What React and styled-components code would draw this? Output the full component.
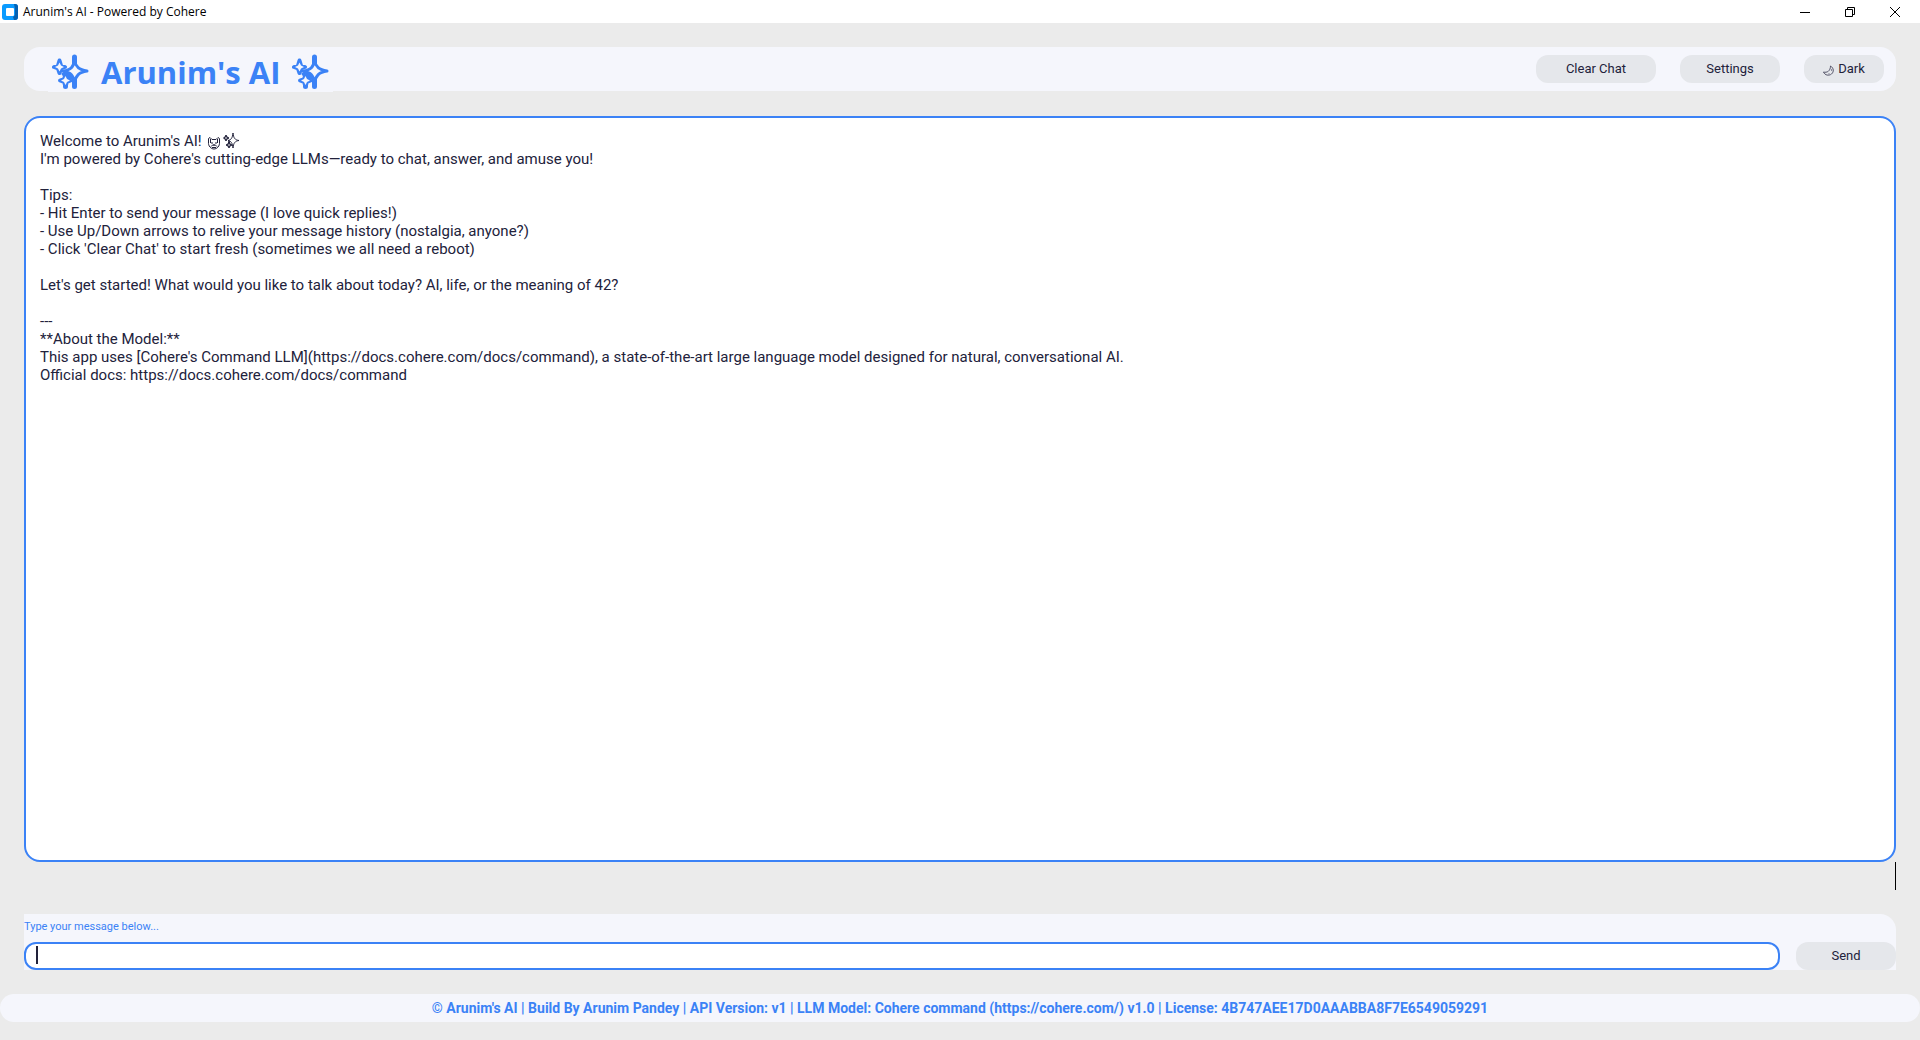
import styled, { createGlobalStyle } from "styled-components";
import { useState } from "react";

const color = {
  bg: "#ebebeb",
  panel: "#f5f6fc",
  main: "#3b82f6",
  text: "#22223b",
  button: "#e5e7eb",
};

const GlobalStyle = createGlobalStyle`
  * {
    box-sizing: border-box;
  }
  body {
    margin: 0;
    background-color: ${color.bg};
    color: ${color.text};
    font-family: Roboto, "Liberation Sans", sans-serif;
  }
`;

const Window = styled.div`
  display: flex;
  flex-direction: column;
  min-height: 100vh;
  padding-bottom: 18px;
`;

const TitleBar = styled.div`
  display: flex;
  align-items: center;
  justify-content: space-between;
  height: 23px;
  padding: 0 3px 0 2px;
  background-color: #fff;
  color: #000;
`;
const AppName = styled.div`
  display: flex;
  align-items: center;
  gap: 5px;
  font-family: "Open Sans", "Noto Sans", sans-serif;
  font-size: 12px;
  line-height: 16px;
`;
const WindowButtons = styled.div`
  display: flex;
`;
const WindowButton = styled.button`
  display: flex;
  align-items: center;
  justify-content: center;
  width: 45px;
  height: 20px;
  padding: 0;
  border: none;
  background: none;
  color: #000;
`;

const Main = styled.main`
  display: flex;
  flex: 1;
  flex-direction: column;
  padding: 24px;
`;
const Header = styled.header`
  display: flex;
  align-items: center;
  justify-content: space-between;
  height: 44px;
  padding: 0 12px 0 24px;
  border-radius: 16px;
  background-color: ${color.panel};
`;
const Logo = styled.h1`
  display: flex;
  align-items: center;
  align-self: flex-start;
  gap: 12px;
  margin: 0;
  padding: 5px 4px 0;
  background-color: ${color.panel};
  font-family: "Open Sans", "Noto Sans", sans-serif;
  font-size: 31px;
  line-height: 40px;
  font-weight: 700;
  color: ${color.main};
`;
const Menu = styled.nav`
  display: flex;
  align-items: center;
  gap: 24px;
`;
const Button = styled.button`
  display: flex;
  align-items: center;
  justify-content: center;
  gap: 4px;
  flex-shrink: 0;
  width: ${({ $width }) => $width};
  height: 28px;
  padding: 0 0 2px;
  border: none;
  border-radius: 12px;
  background-color: ${color.button};
  color: ${color.text};
  font-family: inherit;
  font-size: 13px;
  cursor: pointer;
  svg {
    margin-top: 4px;
  }
`;

const Chat = styled.section`
  flex: 1;
  margin-top: 25px;
  padding: 14px;
  border: 2px solid ${color.main};
  border-radius: 16px;
  background-color: #fff;
`;
const Line = styled.p`
  min-height: 18px;
  margin: 0;
  font-size: 15px;
  line-height: 18px;
  svg {
    margin-left: 2px;
    vertical-align: -4px;
  }
`;
const Status = styled.div`
  align-self: flex-end;
  width: 1px;
  height: 28px;
  margin-bottom: 24px;
  background-color: #000;
`;

const Form = styled.form`
  padding-top: 4px;
  border-top-right-radius: 16px;
  background-color: ${color.panel};
`;
const Label = styled.label`
  display: block;
  font-size: 11px;
  line-height: 18px;
  padding-bottom: 6px;
  color: ${color.main};
`;
const InputRow = styled.div`
  display: flex;
  gap: 16px;
`;
const InputBox = styled.div`
  position: relative;
  flex: 1;
`;
const Input = styled.input`
  display: block;
  width: 100%;
  height: 28px;
  padding: 0 10px;
  border: 2px solid ${color.main};
  border-radius: 12px;
  outline: none;
  background-color: #fff;
  color: ${color.text};
  font-family: inherit;
  font-size: 15px;
  caret-color: transparent;
`;
const Caret = styled.span`
  position: absolute;
  top: 4px;
  left: 12px;
  width: 2px;
  height: 18px;
  background-color: ${color.text};
`;

const Footer = styled.footer`
  border-radius: 14px;
  background-color: ${color.panel};
  font-size: 14px;
  line-height: 28px;
  font-weight: 700;
  text-align: center;
  color: ${color.main};
`;

const AppIcon = () => (
  <svg width="16" height="16" viewBox="0 0 16 16">
    <rect width="16" height="16" rx="3" fill="#0a9bff" />
    <path d="M12 0h1a3 3 0 0 1 3 3v10a3 3 0 0 1-3 3h-1l-1-3 2-2V5z" fill="#0560b0" />
    <rect x="4" y="4" width="8" height="8" rx="1" fill="#fff" />
  </svg>
);

const Sparkles = () => (
  <svg width="37" height="36" viewBox="0 0 37 36" fill="none" strokeLinejoin="round" strokeLinecap="round">
    <g stroke={color.main}>
      <path d="M22.500 3V32.500M13.500 28V32.500" strokeWidth="5" />
      <path d="M11 20l5-3 5 5-4 4z" strokeWidth="3" fill={color.main} />
      <path
        d="M22.500 6C23.500 13 27 16 35 17C27 18 23.500 21.500 22.500 29C21.500 21.500 19 18.500 11 17C19 16 21.500 13 22.500 6Z"
        strokeWidth="3"
        fill={color.panel}
      />
      <path d="M7.500 6.500L9 11.500L13 13L9 14.500L7.500 19L6 14.500L2 13L6 11.500Z" strokeWidth="4" />
      <path d="M13.500 21L15 25L18.500 26.500L15 28L13.500 32L12 28L8 26.500L12 25Z" strokeWidth="4" />
    </g>
    <g fill={color.panel}>
      <path d="M7.500 8.500L9 11.500L12 13L9 14.500L7.500 17.500L6 14.500L3 13L6 11.500Z" />
      <path d="M13.500 22L15 25L18 26.500L15 28L13.500 31L12 28L9 26.500L12 25Z" />
    </g>
  </svg>
);

const Bear = () => (
  <svg width="14" height="16" viewBox="0 0 14 16" fill="none" stroke={color.text}>
    <path d="M1.500 9V4.500L3 3.500L5 5.500H9L11 3.500L12.500 4.500V9" />
    <path d="M1.500 8C1 12 4 15 7 15S13 12 12.500 8" />
    <path d="M3.500 5V9M10.500 5V9M4 9h2M8 9h2M4 12.500C5 10.500 9 10.500 10 12.500M5 13.500h4M6 11h2" />
  </svg>
);

const SmallSparkles = () => (
  <svg width="17" height="18" viewBox="0 0 17 18" fill="#fff" stroke={color.text} strokeLinejoin="round">
    <path d="M10 1C10.500 6 12 8 16 8.500C12 9 10.500 11 10 16C9.500 11 8 9 5 8.500C8 8 9.500 6 10 1Z" />
    <path d="M3 3L4 5L6 6L4 7L3 9L2 7L0.500 6L2 5Z" fill={color.text} />
    <path d="M6 9L7 12L9 13L7 14L6 16L5 14L3 13L5 12Z" fill={color.text} />
    <path d="M2 6h2M5 13h2" stroke="#fff" />
  </svg>
);

const Moon = () => (
  <svg width="11" height="11" viewBox="0 0 11 11" fill="none" stroke="#55556a">
    <path d="M7.500 1C11 3 11 7 8.500 9C6 11 2 10.500 0.500 7C4 8 7.500 6 7.500 1Z" />
    <path d="M8.500 4V6M5 9h2" stroke="#8b8b9c" />
  </svg>
);

const tips = [
  "I'm powered by Cohere's cutting-edge LLMs—ready to chat, answer, and amuse you!",
  "",
  "Tips:",
  "- Hit Enter to send your message (I love quick replies!)",
  "- Use Up/Down arrows to relive your message history (nostalgia, anyone?)",
  "- Click 'Clear Chat' to start fresh (sometimes we all need a reboot)",
  "",
  "Let's get started! What would you like to talk about today? AI, life, or the meaning of 42?",
  "",
  "---",
  "**About the Model:**",
  "This app uses [Cohere's Command LLM](https://docs.cohere.com/docs/command), a state-of-the-art large language model designed for natural, conversational AI.",
  "Official docs: https://docs.cohere.com/docs/command",
];

export default function App() {
  const [message, setMessage] = useState("");
  return (
    <>
      <GlobalStyle />
      <Window>
        <TitleBar>
          <AppName>
            <AppIcon />
            Arunim's AI - Powered by Cohere
          </AppName>
          <WindowButtons>
            <WindowButton aria-label="Minimize">
              <svg width="10" height="10" viewBox="0 0 10 10">
                <path d="M0 5.500h10" stroke="currentColor" />
              </svg>
            </WindowButton>
            <WindowButton aria-label="Restore">
              <svg width="10" height="10" viewBox="0 0 10 10" fill="none" stroke="currentColor">
                <path d="M0.500 2.500h7v7h-7zM2.500 2.500v-2h7v7h-2" />
              </svg>
            </WindowButton>
            <WindowButton aria-label="Close">
              <svg width="10" height="10" viewBox="0 0 10 10">
                <path d="M0 0L10 10M10 0L0 10" stroke="currentColor" />
              </svg>
            </WindowButton>
          </WindowButtons>
        </TitleBar>
        <Main>
          <Header>
            <Logo>
              <Sparkles />
              Arunim's AI
              <Sparkles />
            </Logo>
            <Menu>
              <Button $width="120px">Clear Chat</Button>
              <Button $width="100px">Settings</Button>
              <Button $width="80px">
                <Moon />
                Dark
              </Button>
            </Menu>
          </Header>
          <Chat>
            <Line>
              Welcome to Arunim's AI! <Bear />
              <SmallSparkles />
            </Line>
            {tips.map((tip, index) => (
              <Line key={index}>{tip}</Line>
            ))}
          </Chat>
          <Status />
          <Form
            onSubmit={(e) => {
              e.preventDefault();
              setMessage("");
            }}
          >
            <Label htmlFor="message">Type your message below...</Label>
            <InputRow>
              <InputBox>
                <Input
                  id="message"
                  autoComplete="off"
                  value={message}
                  onChange={(e) => setMessage(e.target.value)}
                />
                {message === "" && <Caret />}
              </InputBox>
              <Button type="submit" $width="100px">
                Send
              </Button>
            </InputRow>
          </Form>
        </Main>
        <Footer>
          © Arunim's AI | Build By Arunim Pandey | API Version: v1 | LLM Model: Cohere command
          (https://cohere.com/) v1.0 | License: 4B747AEE17D0AAABBA8F7E6549059291
        </Footer>
      </Window>
    </>
  );
}
